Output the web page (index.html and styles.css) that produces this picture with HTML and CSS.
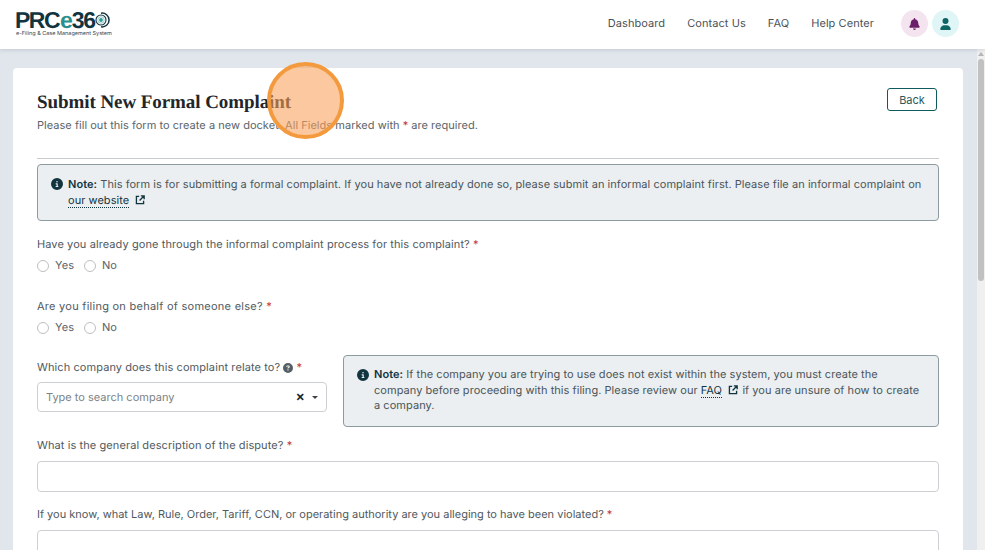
FILE: index.html
```html
<!DOCTYPE html>
<html lang="en">
<head>
<meta charset="utf-8">
<title>Submit New Formal Complaint</title>
<link rel="stylesheet" href="styles.css">
</head>
<body>
<div class="app">
  <header class="topbar">
    <a class="logo">
      <span class="logo-word"><span>PRC</span><span class="logo-e">e</span><span>36</span><svg class="logo-mark" viewBox="0 0 16 16" width="16" height="16"><path d="M7 1.2A6.9 6.9 0 1 1 7 14.8" fill="none" stroke="#12343f" stroke-width="1.5"/><circle cx="7" cy="8" r="5" fill="none" stroke="#12343f" stroke-width="1.1"/><circle cx="7" cy="8" r="3.2" fill="#fff" stroke="#9fc9c9" stroke-width="1"/><circle cx="7" cy="8" r="1.9" fill="#2a9d9a"/></svg></span>
      <span class="logo-sub">e-Filing &amp; Case Management System</span>
    </a>
    <nav class="nav">
      <a>Dashboard</a>
      <a>Contact Us</a>
      <a>FAQ</a>
      <a>Help Center</a>
    </nav>
    <div class="actions">
      <span class="round round-pink"><svg viewBox="0 0 448 512" width="11" height="12"><path fill="#6b1f68" d="M224 0c-18 0-32 14-32 32v19C119 66 64 131 64 208v19c0 47-17 92-48 127l-7 8c-8 9-10 22-5 34s16 18 29 18h382c13 0 24-7 29-18s3-25-5-34l-7-8c-31-35-48-80-48-127v-19c0-77-55-142-128-157V32c0-18-14-32-32-32zm45 493c12-12 19-28 19-45H160c0 17 7 33 19 45s28 19 45 19 33-7 45-19z"/></svg></span>
      <span class="round round-teal"><svg viewBox="0 0 448 512" width="11" height="12"><path fill="#0f6464" d="M224 256a128 128 0 1 0 0-256 128 128 0 1 0 0 256zm-46 48C79 304 0 383 0 482c0 16 13 30 30 30h388c17 0 30-14 30-30 0-99-79-178-178-178h-92z"/></svg></span>
    </div>
  </header>

  <div class="body-row">
    <main class="content">
      <section class="card">
        <div class="title-row">
          <div>
            <h1>Submit New Formal Complaint</h1>
            <p class="subtitle">Please fill out this form to create a new docket. All Fields marked with <span class="req">*</span> are required.</p>
          </div>
          <button class="back" type="button">Back</button>
        </div>
        <hr class="rule">

        <div class="note note-full">
          <svg class="info" viewBox="0 0 512 512" width="12" height="12"><path fill="#12343f" d="M256 512a256 256 0 1 0 0-512 256 256 0 1 0 0 512zm-40-176h24v-64h-24c-13 0-24-11-24-24s11-24 24-24h48c13 0 24 11 24 24v88h8c13 0 24 11 24 24s-11 24-24 24h-80c-13 0-24-11-24-24s11-24 24-24zm40-208a32 32 0 1 1 0 64 32 32 0 1 1 0-64z"/></svg>
          <p><b>Note:</b> This form is for submitting a formal complaint. If you have not already done so, please submit an informal complaint first. Please file an informal complaint on<br><a class="dotted">our website</a> <svg class="ext" viewBox="0 0 12 12" width="10" height="10"><path fill="none" stroke="#12343f" stroke-width="1.6" d="M5 1.7H1.7v8.6h8.6V7M7 1h4v4M11 1L5.5 6.5"/></svg></p>
        </div>

        <div class="field field-q1">
          <label class="label">Have you already gone through the informal complaint process for this complaint? <span class="req">*</span></label>
          <div class="radios">
            <span class="radio"><i></i>Yes</span>
            <span class="radio"><i></i>No</span>
          </div>
        </div>

        <div class="field field-q2">
          <label class="label label-wide">Are you filing on behalf of someone else? <span class="req">*</span></label>
          <div class="radios">
            <span class="radio"><i></i>Yes</span>
            <span class="radio"><i></i>No</span>
          </div>
        </div>

        <div class="company-row">
          <div class="company-col">
            <label class="label">Which company does this complaint relate to? <svg class="help" viewBox="0 0 512 512" width="10" height="10"><path fill="#555f64" d="M256 512a256 256 0 1 0 0-512 256 256 0 1 0 0 512zm-86-345c8-22 29-37 53-37h58c35 0 63 28 63 63 0 23-12 44-32 55l-32 19c0 13-11 24-24 24s-24-11-24-24v-14c0-9 5-16 12-21l44-25c5-3 8-8 8-14 0-9-7-16-15-16h-58c-4 0-7 3-8 6l-1 1c-4 12-18 19-31 15s-19-18-15-31zm54 185a32 32 0 1 1 64 0 32 32 0 1 1-64 0z"/></svg> <span class="req">*</span></label>
            <div class="select">
              <span class="placeholder">Type to search company</span>
              <span class="clear">×</span>
              <span class="caret"></span>
            </div>
          </div>
          <div class="note note-side">
            <svg class="info" viewBox="0 0 512 512" width="12" height="12"><path fill="#12343f" d="M256 512a256 256 0 1 0 0-512 256 256 0 1 0 0 512zm-40-176h24v-64h-24c-13 0-24-11-24-24s11-24 24-24h48c13 0 24 11 24 24v88h8c13 0 24 11 24 24s-11 24-24 24h-80c-13 0-24-11-24-24s11-24 24-24zm40-208a32 32 0 1 1 0 64 32 32 0 1 1 0-64z"/></svg>
            <p><b>Note:</b> If the company you are trying to use does not exist within the system, you must create the<br>company before proceeding with this filing. Please review our <a class="dotted">FAQ</a> <svg class="ext" viewBox="0 0 12 12" width="10" height="10"><path fill="none" stroke="#12343f" stroke-width="1.6" d="M5 1.7H1.7v8.6h8.6V7M7 1h4v4M11 1L5.5 6.5"/></svg> if you are unsure of how to create<br>a company.</p>
          </div>
        </div>

        <div class="field field-desc">
          <label class="label">What is the general description of the dispute? <span class="req">*</span></label>
          <div class="input"></div>
        </div>

        <div class="field field-law">
          <label class="label label-tight">If you know, what Law, Rule, Order, Tariff, CCN, or operating authority are you alleging to have been violated? <span class="req">*</span></label>
          <div class="input"></div>
        </div>
      </section>
    </main>
    <aside class="scrollbar">
      <span class="arrow"></span>
      <span class="thumb"></span>
    </aside>
  </div>
</div>
<div class="click-marker"></div>
</body>
</html>
```

FILE: styles.css
```css
* { box-sizing: border-box; }
html, body { height: 100%; margin: 0; overflow: hidden; }
body {
  font-family: Inter, "Open Sans", sans-serif;
  font-size: 11px;
  color: #5a6469;
  background: #e1e6ec;
  text-rendering: geometricPrecision;
}
.app { display: flex; flex-direction: column; height: 550px; }

.topbar {
  flex: 0 0 49px;
  display: flex;
  align-items: center;
  background: #fff;
  padding: 0 26px 2px 15px;
  box-shadow: 0 1px 4px rgba(30, 50, 70, .16);
  position: relative;
  z-index: 2;
}
.logo { display: flex; flex-direction: column; width: 100px; }
.logo-word {
  display: flex;
  align-items: center;
  height: 20px;
  font-family: "Liberation Sans", sans-serif;
  font-weight: 700;
  font-size: 23px;
  letter-spacing: -1.5px;
  color: #12343f;
  line-height: 20px;
}
.logo-e { color: #2a8f8e; margin: 0 .5px 0 1px; }
.logo-mark { margin-left: 0; flex: none; }
.logo-sub {
  font-size: 5.5px;
  line-height: 7px;
  color: #34474f;
  white-space: nowrap;
  margin: 1px 0 0 1px;
}
.nav { display: flex; gap: 22px; margin-left: auto; padding-bottom: 1px; color: #4a5257; font-size: 11px; letter-spacing: .07px; }
.actions { display: flex; gap: 4px; margin-left: 27px; }
.round { width: 27px; height: 27px; border-radius: 50%; display: flex; align-items: center; justify-content: center; }
.round-pink { background: #f3e4f0; }
.round-teal { background: #dff5f6; }

.body-row { flex: 1; display: flex; min-height: 0; }
.content { flex: 1; min-width: 0; padding: 19px 14px 0 13px; overflow: hidden; }
.card {
  background: #fff;
  border-radius: 4px;
  padding: 20px 24px 0;
  height: 600px;
}
.title-row { display: flex; justify-content: space-between; align-items: flex-start; padding-right: 2px; }
h1 {
  margin: 4px 0 0;
  font-family: "Liberation Serif", serif;
  font-weight: 700;
  font-size: 19px;
  line-height: 22px;
  letter-spacing: -.07px;
  color: #22262a;
}
.subtitle { margin: 4px 0 0; line-height: 15px; letter-spacing: .03px; font-size: 11px; }
.req { color: #c8323c; }
.back {
  width: 50px;
  height: 23px;
  border: 1px solid #0e5a5e;
  border-radius: 3px;
  background: #fff;
  color: #2a5a5e;
  font: inherit;
  padding: 0;
}
.rule { border: 0; border-top: 1px solid #c9cccf; margin: 25px 0 5px; }

.note {
  display: flex;
  gap: 5px;
  background: #ebeff1;
  border: 1px solid #8d9a9f;
  border-radius: 4px;
}
.note p { margin: 0; letter-spacing: .05px; color: #4a5459; }
.note b { color: #12343f; font-weight: 600; }
.note-full { height: 57px; padding: 11px 13px; }
.note-full p { line-height: 16px; }
.note-side { flex: 1; height: 72px; padding: 11px 13px; }
.note-side p { line-height: 15.5px; }
.info { flex: none; margin-top: 2px; }
.ext { vertical-align: -1px; margin: 0 1px 0 3px; }
.dotted { color: #12343f; border-bottom: 1px dotted #12343f; }

.label { display: block; line-height: 15px; letter-spacing: .09px; color: #50595e; }
.label-wide { letter-spacing: .26px; }
.label-tight { letter-spacing: 0; }
.field-q1 { margin-top: 16px; }
.field-q2 { margin-top: 26px; }
.field-desc { margin-top: 11px; }
.field-law { margin-top: 15px; }
.radios { display: flex; gap: 10px; margin-top: 6px; line-height: 15px; }
.radio { display: flex; align-items: center; gap: 6px; letter-spacing: .05px; }
.radio i { width: 12px; height: 12px; border: 1px solid #bdbfc1; border-radius: 50%; background: #fff; }

.company-row { display: flex; align-items: flex-start; gap: 16px; margin-top: 20px; }
.company-col { flex: 0 0 290px; padding-top: 5px; }
.help { vertical-align: -1.5px; margin-left: 0; }
.select {
  display: flex;
  align-items: center;
  height: 30px;
  margin-top: 7px;
  padding: 0 8px 0 8px;
  border: 1px solid #cdd0d3;
  border-radius: 4px;
}
.placeholder { flex: 1; color: #7b8387; letter-spacing: 0; }
.clear { color: #16242a; font-size: 14px; font-weight: 600; line-height: 14px; margin-right: 7px; }
.caret { width: 0; height: 0; border: 3px solid transparent; border-top: 3px solid #3c4448; border-bottom: 0; }
.input { height: 31px; margin-top: 8px; border: 1px solid #cdd0d3; border-radius: 4px; background: #fff; }

.scrollbar {
  flex: 0 0 8px;
  background: #f0f0f1;
  display: flex;
  flex-direction: column;
  align-items: center;
}
.arrow { margin-top: 3px; width: 0; height: 0; border: 3px solid transparent; border-bottom: 4px solid #b5b5b5; border-top: 0; }
.thumb { width: 6px; height: 222px; margin-top: 3px; background: #c1c1c1; border-radius: 3px; }

.click-marker {
  position: absolute;
  left: 267px;
  top: 62px;
  width: 77px;
  height: 77px;
  border-radius: 50%;
  border: 4px solid #f49a3e;
  background: rgba(250, 160, 90, .58);
  z-index: 5;
}
```
